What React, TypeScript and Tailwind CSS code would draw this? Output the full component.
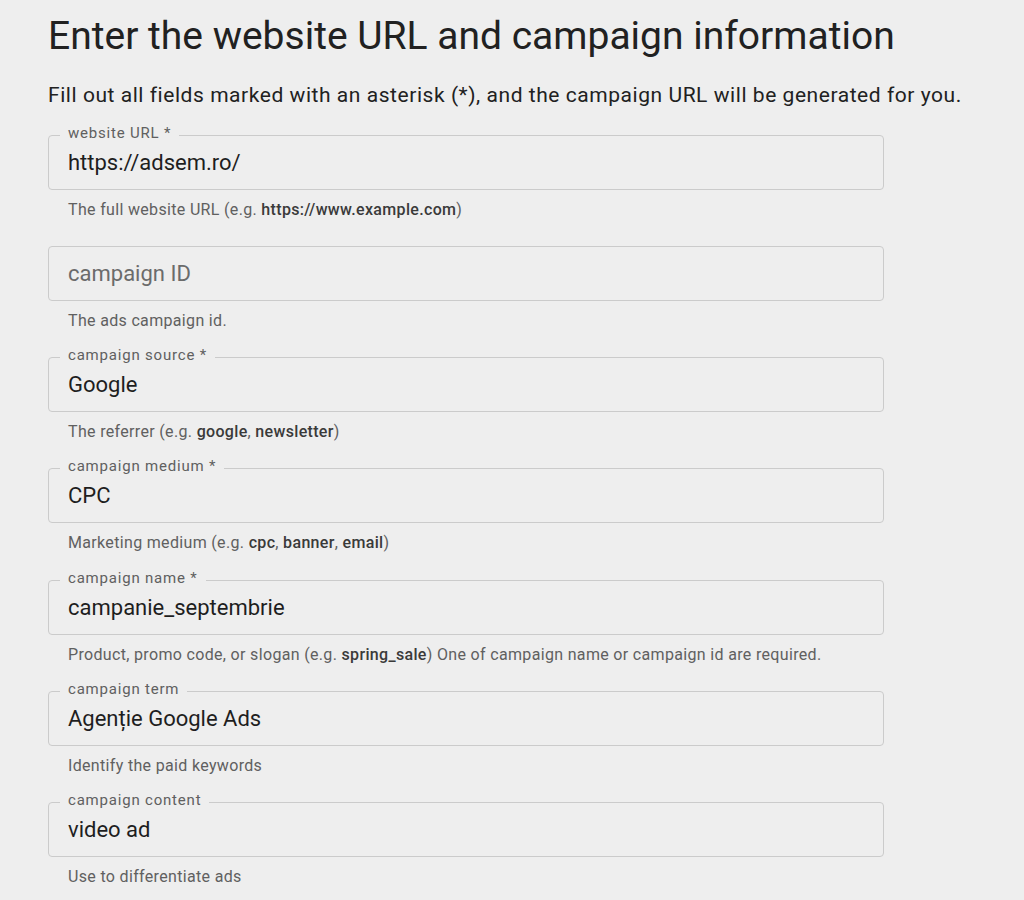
import React from "react";

type Part = { text: string; bold?: boolean };

type Field = {
  id: string;
  label: string;
  required?: boolean;
  value?: string;
  placeholder?: string;
  help: Part[];
};

const fields: Field[] = [
  {
    id: "url",
    label: "website URL",
    required: true,
    value: "https://adsem.ro/",
    help: [
      { text: "The full website URL (e.g. " },
      { text: "https://www.example.com", bold: true },
      { text: ")" },
    ],
  },
  {
    id: "id",
    label: "campaign ID",
    placeholder: "campaign ID",
    help: [{ text: "The ads campaign id." }],
  },
  {
    id: "source",
    label: "campaign source",
    required: true,
    value: "Google",
    help: [
      { text: "The referrer (e.g. " },
      { text: "google", bold: true },
      { text: ", " },
      { text: "newsletter", bold: true },
      { text: ")" },
    ],
  },
  {
    id: "medium",
    label: "campaign medium",
    required: true,
    value: "CPC",
    help: [
      { text: "Marketing medium (e.g. " },
      { text: "cpc", bold: true },
      { text: ", " },
      { text: "banner", bold: true },
      { text: ", " },
      { text: "email", bold: true },
      { text: ")" },
    ],
  },
  {
    id: "name",
    label: "campaign name",
    required: true,
    value: "campanie_septembrie",
    help: [
      { text: "Product, promo code, or slogan (e.g. " },
      { text: "spring_sale", bold: true },
      { text: ") One of campaign name or campaign id are required." },
    ],
  },
  {
    id: "term",
    label: "campaign term",
    value: "Agenție Google Ads",
    help: [{ text: "Identify the paid keywords" }],
  },
  {
    id: "content",
    label: "campaign content",
    value: "video ad",
    help: [{ text: "Use to differentiate ads" }],
  },
];

const OutlinedField: React.FC<{ field: Field }> = ({ field }) => {
  const hasValue = !!field.value;
  return (
    <div className="flex flex-col">
      <div className="relative h-[55px] rounded-[4px] border border-[#cbcbcb] flex items-center px-[19px]">
        {hasValue && (
          <span className="absolute left-[11px] top-[-13px] px-[8px] bg-[#eeeeee] text-[15px] leading-[20px] tracking-[0.8px] text-[#606060]">
            {field.label}
            {field.required && " *"}
          </span>
        )}
        {hasValue ? (
          <span className="text-[22px] text-[#1e1e1e]">{field.value}</span>
        ) : (
          <span className="text-[22px] text-[#6b6b6b]">{field.placeholder}</span>
        )}
      </div>
      <p className="mt-[10px] px-[20px] text-[16px] leading-[20px] tracking-[0.33px] text-[#606060]">
        {field.help.map((p, i) =>
          p.bold ? (
            <b key={i} className="font-medium text-[#3a3a3a]">
              {p.text}
            </b>
          ) : (
            <span key={i}>{p.text}</span>
          )
        )}
      </p>
    </div>
  );
};

export default function App() {
  return (
    <div className="min-h-[900px] bg-[#eeeeee] font-['Roboto',sans-serif] pl-[48px] pt-[12px] overflow-hidden">
      <h1 className="text-[39px] leading-[48px] text-[#212121]">
        Enter the website URL and campaign information
      </h1>
      <p className="mt-[21px] text-[21px] leading-[28px] tracking-[0.55px] text-[#212121]">
        Fill out all fields marked with an asterisk (*), and the campaign URL will be generated for you.
      </p>
      <div className="mt-[26px] w-[836px] flex flex-col gap-[26.15px]">
        {fields.map((f) => (
          <OutlinedField key={f.id} field={f} />
        ))}
      </div>
    </div>
  );
}
